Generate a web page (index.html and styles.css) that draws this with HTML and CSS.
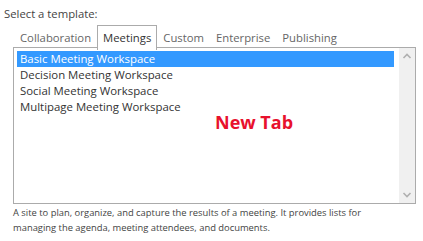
FILE: index.html
```html
<!DOCTYPE html>
<html lang="en">
<head>
  <meta charset="UTF-8" />
  <title>Select a template</title>
  <link rel="stylesheet" href="styles.css">
</head>
<body>
  <div class="picker">
    <div class="label">Select a template:</div>
    <div class="tabs">
      <span class="tab">Collaboration</span>
      <span class="tab active">Meetings</span>
      <span class="tab">Custom</span>
      <span class="tab">Enterprise</span>
      <span class="tab">Publishing</span>
    </div>
    <div class="listbox">
      <ul class="items">
        <li class="selected">Basic Meeting Workspace</li>
        <li>Decision Meeting Workspace</li>
        <li>Social Meeting Workspace</li>
        <li>Multipage Meeting Workspace</li>
      </ul>
      <div class="newtab">New Tab</div>
      <div class="scrollbar">
        <svg width="16" height="16" viewBox="0 0 16 16"><path d="M4.5 10 L8 6.5 L11.5 10" fill="none" stroke="#b0b0b0" stroke-width="1.6"/></svg>
        <svg width="16" height="16" viewBox="0 0 16 16"><path d="M4.5 6 L8 9.5 L11.5 6" fill="none" stroke="#b0b0b0" stroke-width="1.6"/></svg>
      </div>
    </div>
    <p class="desc">A site to plan, organize, and capture the results of a meeting. It provides lists for managing the agenda, meeting attendees, and documents.</p>
  </div>
</body>
</html>
```

FILE: styles.css
```css
body {
  margin: 0;
  background: #fff;
  font-family: "Open Sans", "Noto Sans", sans-serif;
  color: #444;
}

.picker {
  width: 403px;
  padding: 6px 0 0 13px;
}

.label {
  margin-left: -9px;
  font-size: 11.3px;
  line-height: 16px;
  color: #444;
}

.tabs {
  display: flex;
  margin-top: 3px;
  padding-left: 1px;
  height: 23px;
  position: relative;
  z-index: 1;
}

.tab {
  padding: 2px 5px 0 5px;
  font-size: 11.3px;
  line-height: 19px;
  color: #666;
  border: 1px solid transparent;
  border-bottom: none;
}

.tab.active {
  color: #333;
  background: #fff;
  border-color: #ababab;
  height: 22px;
}

.listbox {
  position: relative;
  display: flex;
  height: 155px;
  border: 1px solid #ababab;
  margin-top: -1px;
}

.items {
  flex: 1;
  list-style: none;
  margin: 0;
  padding: 3px 5px 0 3px;
}

.items li {
  height: 16px;
  line-height: 16px;
  padding-left: 3px;
  font-size: 11.4px;
  color: #333;
}

.items li.selected {
  background: #3399ff;
  color: #fff;
}

.newtab {
  position: absolute;
  left: 201px;
  top: 62px;
  font-size: 18px;
  font-weight: bold;
  color: #e8112d;
}

.scrollbar {
  width: 16px;
  background: #f0f0f0;
  display: flex;
  flex-direction: column;
  justify-content: space-between;
}

.desc {
  width: 370px;
  margin: 1px 0 0 0;
  font-size: 9.4px;
  line-height: 15px;
  color: #444;
}
```
